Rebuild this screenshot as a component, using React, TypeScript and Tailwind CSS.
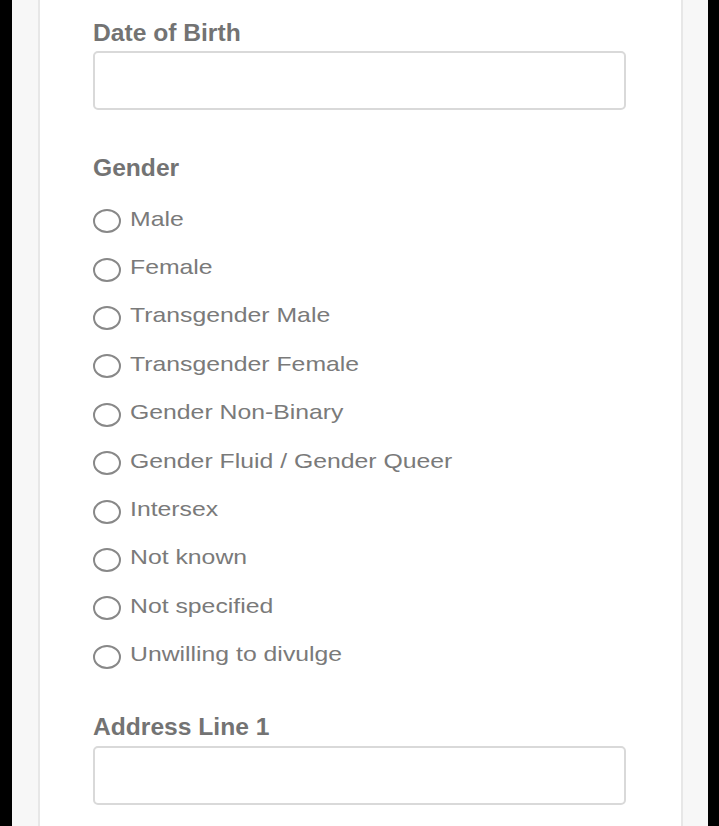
import React from "react";

const options = [
  "Male",
  "Female",
  "Transgender Male",
  "Transgender Female",
  "Gender Non-Binary",
  "Gender Fluid / Gender Queer",
  "Intersex",
  "Not known",
  "Not specified",
  "Unwilling to divulge",
];

function Label({ children, className = "" }: { children: React.ReactNode; className?: string }) {
  return (
    <div className={"h-[23px] text-[23px] font-bold leading-[23px] text-[#737373] " + className}>
      <span className="inline-block origin-left scale-x-[1.07]">{children}</span>
    </div>
  );
}

function Input({ className = "" }: { className?: string }) {
  return (
    <div
      className={
        "h-[59px] w-full rounded-[5px] border-2 border-[#d9d9d9] bg-white " + className
      }
    />
  );
}

export default function App() {
  return (
    <div className="flex h-[826px] w-[719px] overflow-hidden bg-black font-['Liberation_Sans',Arial,sans-serif]">
      <div className="ml-[12px] flex h-full w-[696px] bg-[#f7f7f7] pl-[26px] pr-[25px]">
        <div className="h-full flex-1 border-x-2 border-[#e7e7e7] bg-white pl-[53px] pr-[55px]">
          <Label className="mt-[22px]">Date of Birth</Label>
          <Input className="mt-[6px]" />

          <Label className="mt-[47px]">Gender</Label>
          <div className="mt-[17px] flex flex-col">
            {options.map((o) => (
              <label key={o} className="flex h-[48.4px] items-center gap-[9px]">
                <span className="h-[24px] w-[28px] shrink-0 rounded-[50%] border-2 border-[#888888]" />
                <span className="pb-[5px] text-[21px] leading-[24px] text-[#7a7a7a]">
                  <span className="inline-block origin-left scale-x-[1.18]">{o}</span>
                </span>
              </label>
            ))}
          </div>

          <Label className="mt-[35px]">Address Line 1</Label>
          <Input className="mt-[7px]" />
        </div>
      </div>
    </div>
  );
}
